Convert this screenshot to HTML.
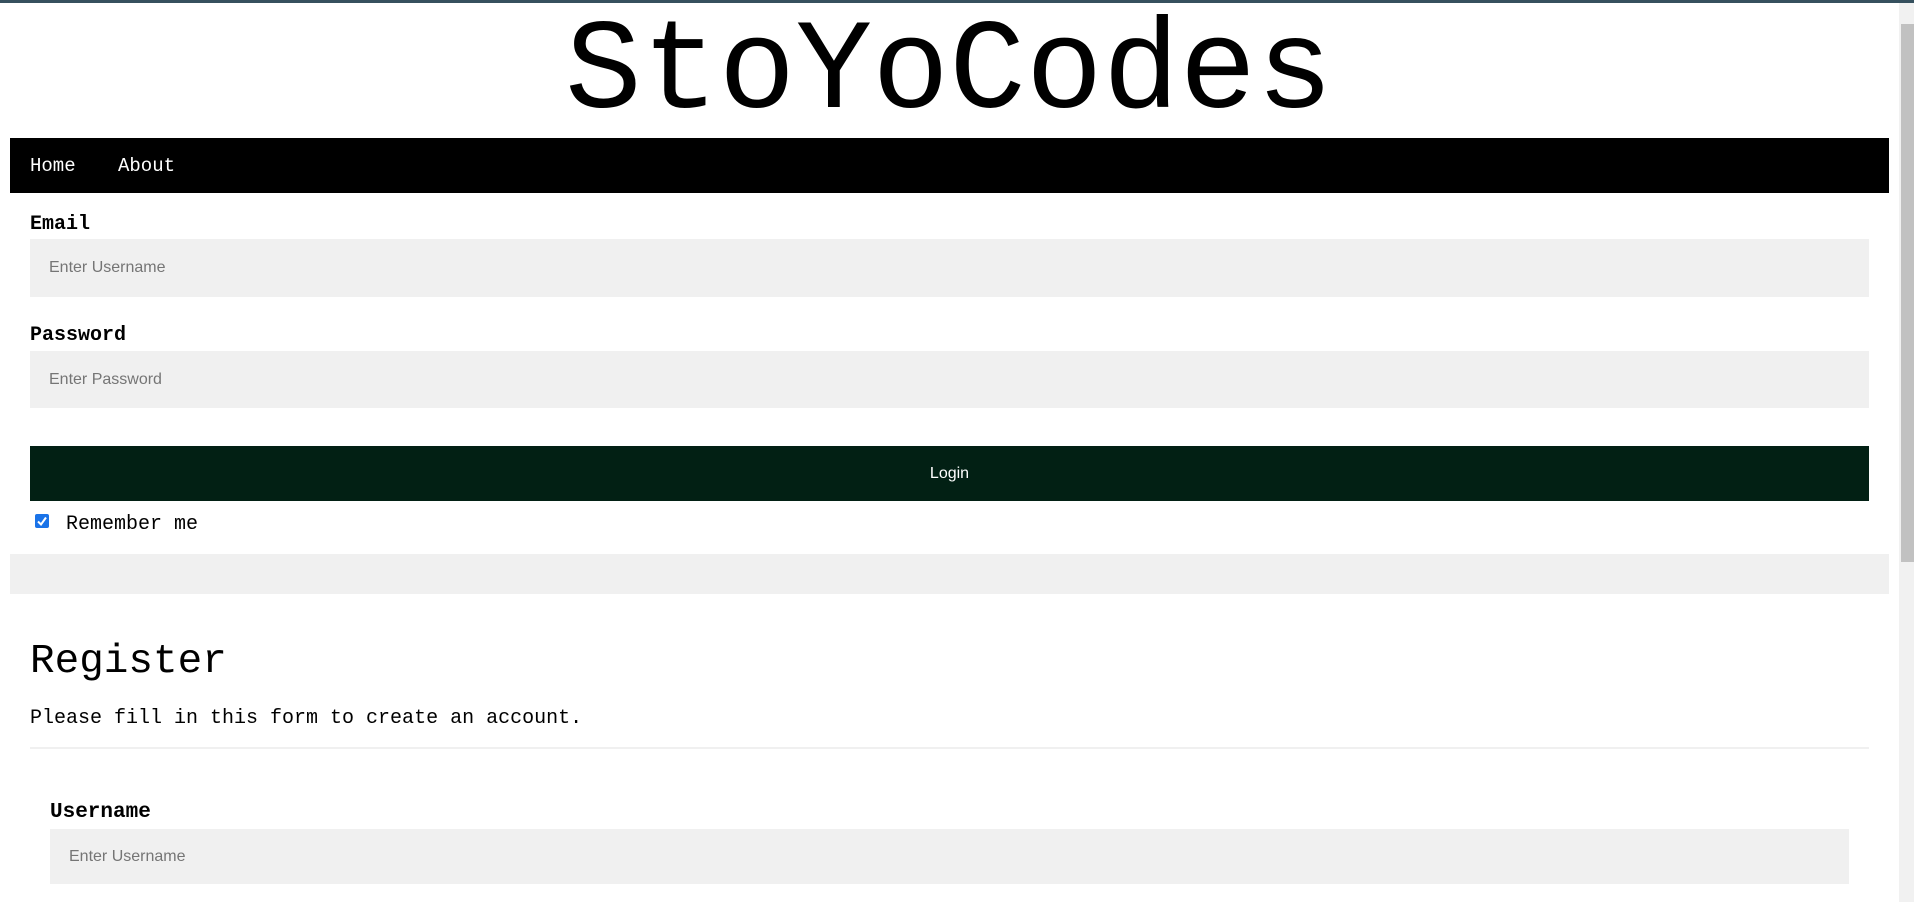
<!DOCTYPE html>
<html><head><meta charset="utf-8"><style>
*{margin:0;padding:0;box-sizing:border-box}
html,body{width:1914px;height:902px;overflow:hidden;background:#fff;position:relative}
.m{font-family:"Liberation Mono","DejaVu Sans Mono",monospace;position:absolute;line-height:1em;white-space:nowrap;color:#000}
.box{position:absolute;background:#f0f0f0;display:flex;align-items:center;font-family:"Liberation Sans",Arial,sans-serif;font-size:16px;color:#757575}
</style></head><body>
<div style="position:absolute;left:0;top:0;width:1914px;height:3px;background:#36505e"></div>
<div class="m" style="left:565px;top:10px;font-size:128px">StoYoCodes</div>
<div style="position:absolute;left:10px;top:138px;width:1879px;height:55px;background:#000"></div>
<div class="m" style="left:30px;top:157px;font-size:19px;color:#fff">Home</div>
<div class="m" style="left:118px;top:157px;font-size:19px;color:#fff">About</div>
<div class="m" style="left:30px;top:215px;font-size:20px;font-weight:bold">Email</div>
<div class="box" style="left:30px;top:239px;width:1839px;height:58px;padding-left:19px">Enter Username</div>
<div class="m" style="left:30px;top:326px;font-size:20px;font-weight:bold">Password</div>
<div class="box" style="left:30px;top:351px;width:1839px;height:57px;padding-left:19px">Enter Password</div>
<div style="position:absolute;left:30px;top:446px;width:1839px;height:55px;background:#022014;color:#fff;font-family:'Liberation Sans',Arial,sans-serif;font-size:16px;display:flex;align-items:center;justify-content:center">Login</div>
<div style="position:absolute;left:35px;top:514px;width:14px;height:14px;background:#1a73e8;border-radius:2px"><svg width="14" height="14" viewBox="0 0 14 14"><path d="M3 7.5 L6 10.5 L11 3.5" stroke="#fff" stroke-width="2" fill="none"/></svg></div>
<div class="m" style="left:66px;top:515px;font-size:20px">Remember me</div>
<div style="position:absolute;left:10px;top:554px;width:1879px;height:40px;background:#f0f0f0"></div>
<div class="m" style="left:30px;top:642px;font-size:41px">Register</div>
<div class="m" style="left:30px;top:709px;font-size:20px">Please fill in this form to create an account.</div>
<div style="position:absolute;left:30px;top:747px;width:1839px;height:2px;background:#f0f0f0"></div>
<div class="m" style="left:50px;top:802px;font-size:21px;font-weight:bold">Username</div>
<div class="box" style="left:50px;top:829px;width:1799px;height:55px;padding-left:19px">Enter Username</div>
<div style="position:absolute;left:1899px;top:3px;width:15px;height:899px;background:#f1f1f1"></div>
<div style="position:absolute;left:1901px;top:24px;width:13px;height:538px;background:#c1c1c1"></div>
</body></html>
